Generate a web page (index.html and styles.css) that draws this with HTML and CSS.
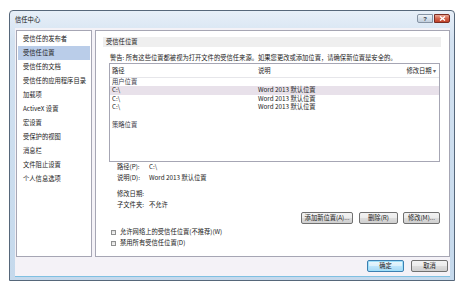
FILE: index.html
```html
<!DOCTYPE html>
<html lang="zh-CN">
<head>
  <meta charset="UTF-8" />
  <meta name="viewport" content="width=device-width, initial-scale=1.0" />
  <title>信任中心</title>
  <link rel="stylesheet" href="styles.css">
</head>
<body>
  <div class="window">
    <div class="titlebar">
      <span class="title">信任中心</span>
      <div class="caption-buttons">
        <span class="cap-btn help">?</span>
        <span class="cap-btn close">
          <svg width="7" height="5" viewBox="0 0 7 5"><path d="M1 0.5 L6 4.5 M6 0.5 L1 4.5" stroke="#fff" stroke-width="1.4" fill="none"/></svg>
        </span>
      </div>
    </div>

    <div class="client">
      <div class="panes">
        <ul class="nav">
          <li>受信任的发布者</li>
          <li class="active">受信任位置</li>
          <li>受信任的文档</li>
          <li>受信任的应用程序目录</li>
          <li>加载项</li>
          <li>ActiveX 设置</li>
          <li>宏设置</li>
          <li>受保护的视图</li>
          <li>消息栏</li>
          <li>文件阻止设置</li>
          <li>个人信息选项</li>
        </ul>

        <div class="pane">
          <div class="section-title">受信任位置</div>
          <div class="section">
            <p class="warning">警告: 所有这些位置都被视为打开文件的受信任来源。如果您更改或添加位置，请确保新位置是安全的。</p>

            <div class="listview">
              <div class="lv-head">
                <span class="col-path">路径</span>
                <span class="col-desc">说明</span>
                <span class="col-date">修改日期 <span class="sort">▾</span></span>
              </div>
              <div class="lv-group">用户位置</div>
              <div class="lv-row selected"><span class="col-path">C:\</span><span class="col-desc">Word 2013 默认位置</span></div>
              <div class="lv-row"><span class="col-path">C:\</span><span class="col-desc">Word 2013 默认位置</span></div>
              <div class="lv-row"><span class="col-path">C:\</span><span class="col-desc">Word 2013 默认位置</span></div>
              <div class="lv-group policy">策略位置</div>
            </div>

            <div class="details">
              <div class="field"><span class="field-label">路径(P):</span><span>C:\</span></div>
              <div class="field"><span class="field-label">说明(D):</span><span>Word 2013 默认位置</span></div>
              <div class="field gap"><span class="field-label">修改日期:</span><span></span></div>
              <div class="field"><span class="field-label">子文件夹:</span><span>不允许</span></div>
            </div>

            <div class="actions">
              <button class="btn btn-add">添加新位置(A)...</button>
              <button class="btn btn-del">删除(R)</button>
              <button class="btn btn-edit">修改(M)...</button>
            </div>

            <div class="checks">
              <label class="check"><span class="box"></span>允许网络上的受信任位置(不推荐)(W)</label>
              <label class="check"><span class="box"></span>禁用所有受信任位置(D)</label>
            </div>
          </div>
        </div>
      </div>

      <div class="footer">
        <button class="btn btn-ok">确定</button>
        <button class="btn">取消</button>
      </div>
    </div>
  </div>
</body>
</html>
```

FILE: styles.css
```css
body {
  margin: 0;
  background: #fff;
  font-family: "Noto Sans CJK SC", sans-serif;
  font-size: 6.3px;
  color: #222;
}

.window {
  margin: 10px 0 0 9px;
  width: 446px;
  height: 271px;
  box-sizing: border-box;
  border: 1px solid #56677a;
  border-radius: 4px 4px 0 0;
  background: linear-gradient(#e7eff8, #d3e2f1 30px, #c5d9ec);
  padding: 0 4px 3px 5px;
  display: flex;
  flex-direction: column;
}

.titlebar {
  height: 17px;
  display: flex;
  align-items: flex-start;
}

.title {
  line-height: 17px;
  color: #111;
}

.caption-buttons {
  margin-left: auto;
  margin-top: 3px;
  display: flex;
  gap: 1px;
}

.cap-btn {
  height: 9px;
  box-sizing: border-box;
  display: flex;
  align-items: center;
  justify-content: center;
}

.help {
  width: 16px;
  border: 1px solid #8593a4;
  border-radius: 2px 0 0 2px;
  background: linear-gradient(#eef3f8, #d5dfea 50%, #c2cfdd);
  color: #334;
  font-family: "Liberation Sans", sans-serif;
  font-size: 6px;
  font-weight: bold;
}

.close {
  width: 16px;
  border: 1px solid #7a2c22;
  border-radius: 0 2px 2px 0;
  background: linear-gradient(#eba895, #d3634b 50%, #c0422a);
}

.client {
  flex: 1;
  background: #f4f2f7;
  border-bottom: 1px solid #7fc0e2;
  padding: 2px 0 0 1px;
  display: flex;
  flex-direction: column;
}

.panes {
  display: flex;
  gap: 3px;
  height: 227px;
}

.nav {
  width: 76px;
  box-sizing: border-box;
  margin: 0;
  padding: 1px;
  list-style: none;
  background: #fff;
  border: 1px solid #a6a6b4;
}

.nav li {
  height: 14px;
  line-height: 14px;
  padding-left: 5px;
  white-space: nowrap;
}

.nav li.active {
  background: #bacde9;
}

.pane {
  flex: 1;
  box-sizing: border-box;
  border: 1px solid #a6a6b4;
  background: #fff;
  padding: 6px 8px 0 7px;
}

.section-title {
  height: 10px;
  line-height: 10px;
  background: #efefef;
  padding-left: 3px;
}

.section {
  padding-left: 6px;
}

.warning {
  margin: 6px 0 0 1px;
  line-height: 10px;
  white-space: nowrap;
}

.listview {
  height: 99px;
  box-sizing: border-box;
  border: 1px solid #a6a6b4;
  margin-right: 1px;
}

.lv-head {
  display: flex;
  height: 13px;
  line-height: 13px;
  padding-left: 2px;
  border-bottom: 1px solid #e6e6ea;
}

.lv-group {
  height: 8px;
  line-height: 8px;
  padding-left: 2px;
  color: #3a3a48;
}

.lv-group.policy {
  margin-top: 9.5px;
}

.lv-row {
  display: flex;
  height: 8.5px;
  line-height: 8.5px;
  padding-left: 2px;
}

.lv-row.selected {
  background: #e8e1ea;
}

.col-path {
  width: 146px;
}

.col-date {
  margin-left: auto;
  padding-right: 3px;
}

.sort {
  color: #666;
}

.details {
  padding-left: 8px;
}

.field {
  display: flex;
  line-height: 9px;
  height: 9px;
  margin-top: 2px;
}

.field:first-child {
  margin-top: 0;
}

.field.gap {
  margin-top: 7px;
}

.field-label {
  width: 32px;
}

.actions {
  display: flex;
  justify-content: flex-end;
  margin-top: 3px;
  padding-right: 1px;
}

.btn {
  height: 12px;
  box-sizing: border-box;
  padding: 0;
  border: 1px solid #707070;
  border-radius: 2px;
  background: linear-gradient(#f3f3f3, #ebebeb 50%, #dddddd 50%, #cfcfcf);
  font-family: "Noto Sans CJK SC", sans-serif;
  font-size: 6.3px;
  line-height: 10px;
  color: #222;
  width: 37px;
}

.btn-add {
  width: 52px;
}

.btn-del {
  width: 39px;
  margin-left: 6px;
}

.btn-edit {
  margin-left: 5px;
}

.checks {
  margin-top: 3px;
  padding-left: 2px;
}

.check {
  display: flex;
  align-items: center;
  gap: 4px;
  height: 10px;
  line-height: 10px;
  margin-top: 1px;
}

.box {
  width: 5px;
  height: 5px;
  box-sizing: border-box;
  border: 1px solid #8e8f8f;
  background: linear-gradient(#dcdcdc, #f6f6f6);
}

.footer {
  display: flex;
  justify-content: flex-end;
  gap: 7px;
  padding: 3px 2px 0 0;
}

.btn-ok {
  border-color: #3c7fb1;
  background: linear-gradient(#eaf6fd, #d9f0fc 50%, #bee6fd 50%, #a7d9f5);
  box-shadow: inset 0 0 0 1px #9fe0fa;
}
```
